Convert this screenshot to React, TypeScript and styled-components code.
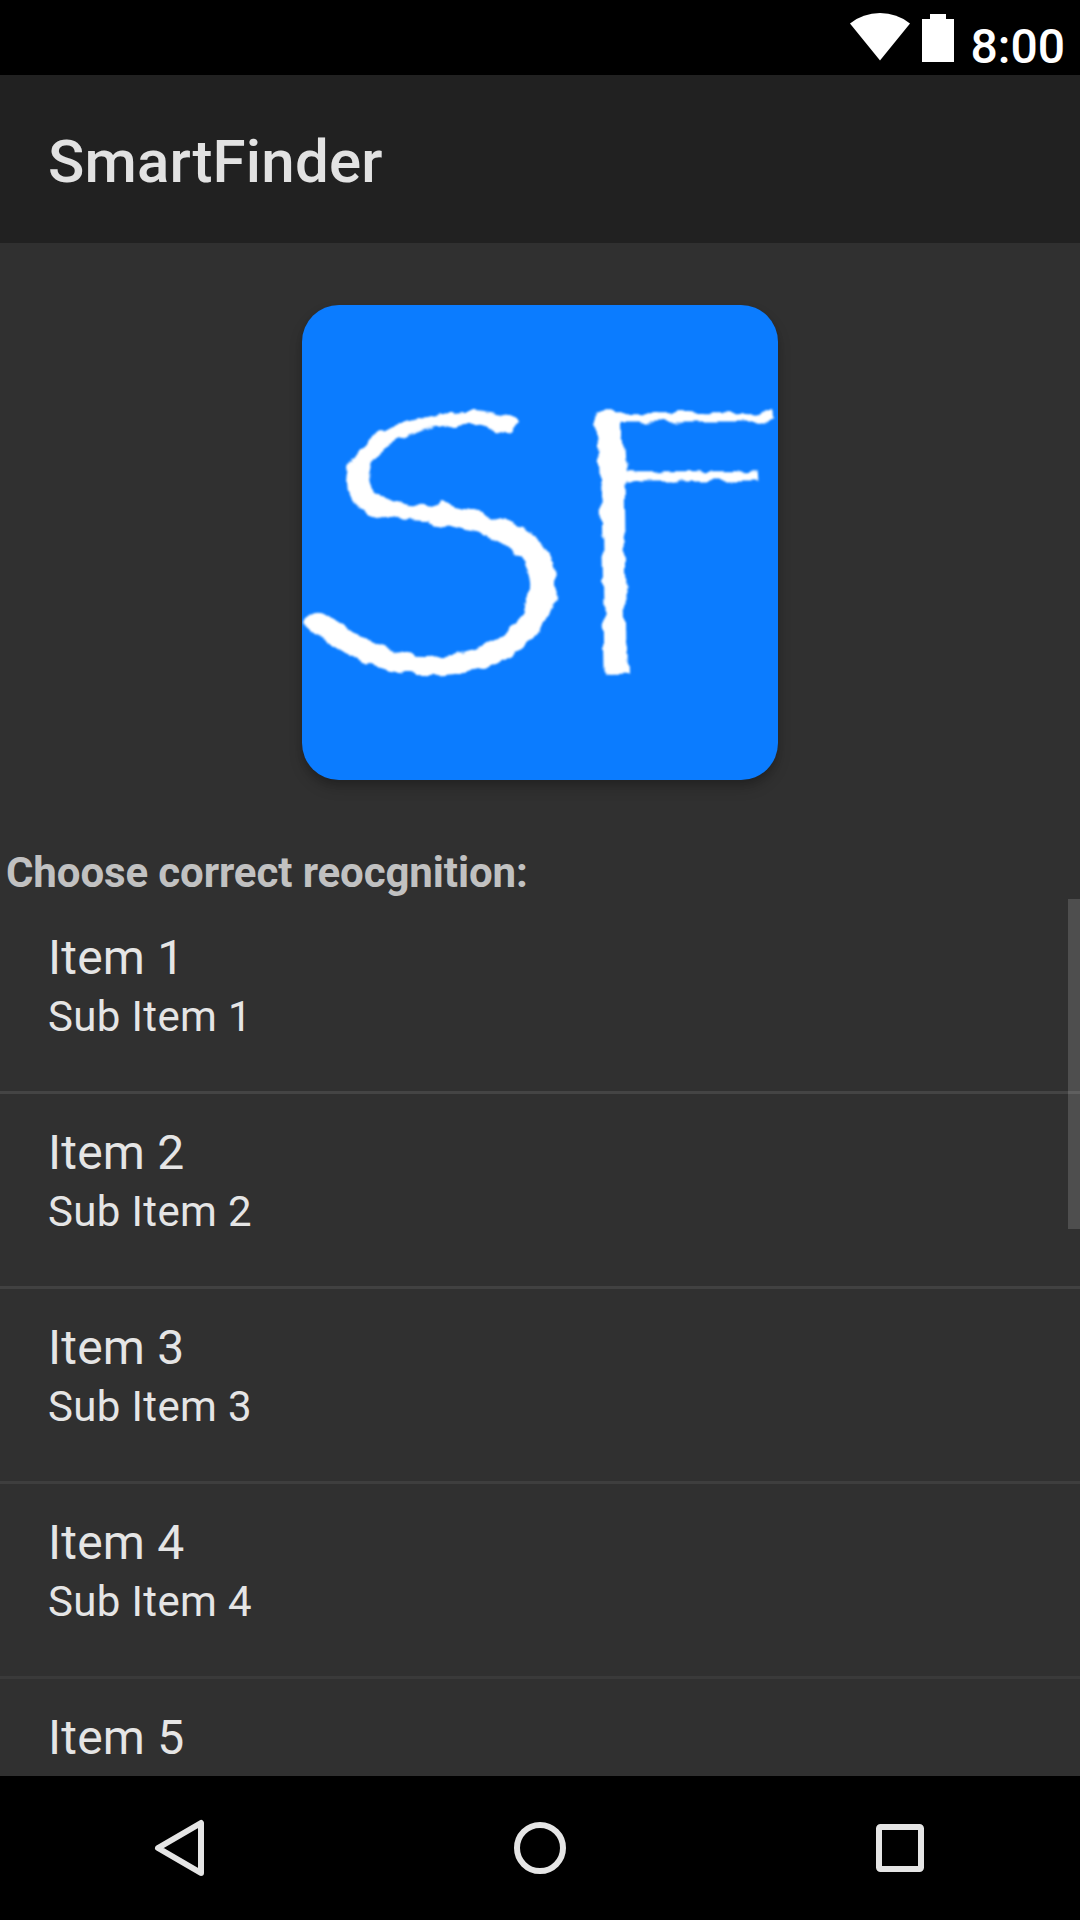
import React from "react";
import styled, { createGlobalStyle } from "styled-components";

const GlobalStyle = createGlobalStyle`
  * { box-sizing: border-box; }
  body { margin: 0; background: #303030; }
`;

const Screen = styled.div`
  display: flex;
  flex-direction: column;
  width: 1080px;
  height: 1920px;
  overflow: hidden;
  background: #303030;
  color: #e5e5e5;
  font-family: Roboto, "Noto Sans", sans-serif;
`;

const StatusBar = styled.div`
  display: flex;
  flex: none;
  justify-content: flex-end;
  height: 75px;
  padding-right: 15px;
  background: #000;
`;

const WifiIcon = styled.svg`
  width: 60px;
  height: 48px;
  margin: 13px 12px 0 0;
`;

const BatteryIcon = styled.svg`
  width: 32px;
  height: 48px;
  margin: 14px 17px 0 0;
`;

const Clock = styled.span`
  padding-top: 18px;
  color: #fff;
  font-size: 48px;
  font-weight: 500;
  line-height: 58px;
`;

const AppBar = styled.header`
  display: flex;
  flex: none;
  align-items: center;
  height: 168px;
  padding: 5px 48px 0;
  background: #212121;
`;

const Title = styled.h1`
  margin: 0;
  color: #e2e2e2;
  font-size: 60px;
  font-weight: 500;
  letter-spacing: 0.2px;
  line-height: 72px;
`;

const Hero = styled.div`
  display: flex;
  flex: none;
  justify-content: center;
  height: 599px;
  padding-top: 62px;
`;

const Logo = styled.div`
  width: 476px;
  height: 475px;
  border-radius: 37px;
  background: #0b7cff;
  box-shadow: 0 8px 14px rgba(0, 0, 0, 0.18), 0 4px 6px rgba(0, 0, 0, 0.12);
`;

const LogoArt = styled.svg`
  display: block;
  width: 476px;
  height: 475px;
  fill: #fff;
  stroke: #fff;
  font-family: Lato, sans-serif;
  font-weight: 300;
`;

const Prompt = styled.p`
  flex: none;
  height: 57px;
  margin: 0;
  padding: 6px 6px 0;
  color: #c1c1c1;
  font-size: 42px;
  font-weight: 700;
  letter-spacing: -0.11px;
  line-height: 50px;
`;

const ListArea = styled.div`
  position: relative;
  flex: 1;
  min-height: 0;
  overflow: hidden;
`;

const Row = styled.div<{ $line: string }>`
  height: 195px;
  padding: 30px 48px 0;
  border-bottom: 3px solid ${(p) => p.$line};
`;

const RowTitle = styled.div`
  height: 58px;
  font-size: 48px;
  letter-spacing: 0.2px;
  line-height: 58px;
`;

const RowSub = styled.div`
  height: 60px;
  font-size: 42px;
  letter-spacing: 0.36px;
  line-height: 60px;
`;

const ScrollThumb = styled.div`
  position: absolute;
  top: 0;
  right: 0;
  width: 12px;
  height: 330px;
  background: rgba(255, 255, 255, 0.145);
`;

const NavBar = styled.nav`
  display: flex;
  flex: none;
  align-items: center;
  justify-content: center;
  gap: 276px;
  height: 144px;
  background: #000;
`;

const NavIcon = styled.svg`
  width: 84px;
  height: 84px;
  fill: none;
  stroke: #e5e5e5;
  stroke-width: 6;
  stroke-linejoin: round;
`;

const items = [
  { title: "Item 1", sub: "Sub Item 1", line: "#444" },
  { title: "Item 2", sub: "Sub Item 2", line: "#414141" },
  { title: "Item 3", sub: "Sub Item 3", line: "#3e3e3e" },
  { title: "Item 4", sub: "Sub Item 4", line: "#3a3a3a" },
  { title: "Item 5", line: "#383838" },
];

export default function App() {
  return (
    <Screen>
      <GlobalStyle />
      <StatusBar>
        <WifiIcon viewBox="0 0 60 48">
          <path d="M0 10.5Q13 0 30 0T60 10.5L30 47.5Z" fill="#fff" />
        </WifiIcon>
        <BatteryIcon viewBox="0 0 32 48">
          <path d="M0 5H8V0H24V5H32V48H0Z" fill="#fff" />
        </BatteryIcon>
        <Clock>8:00</Clock>
      </StatusBar>
      <AppBar>
        <Title>SmartFinder</Title>
      </AppBar>
      <Hero>
        <Logo>
          <LogoArt viewBox="0 0 476 475">
            <defs>
              <filter id="rough" x="-10%" y="-10%" width="120%" height="120%">
                <feTurbulence type="fractalNoise" baseFrequency="0.06" numOctaves="2" seed="4" />
                <feDisplacementMap in="SourceGraphic" scale="11" xChannelSelector="R" yChannelSelector="G" />
                <feGaussianBlur stdDeviation="0.9" />
              </filter>
              <clipPath id="s-upper">
                <path d="M-60-400H400V-170H114L78-91H-60Z" />
              </clipPath>
              <clipPath id="s-lower">
                <path d="M400 100V-171H113L77-92V100Z" />
              </clipPath>
              <clipPath id="s-tail">
                <rect x="-60" y="-91" width="138" height="190" />
              </clipPath>
              <clipPath id="f-upper">
                <rect x="-40" y="-400" width="400" height="290" />
              </clipPath>
              <clipPath id="f-lower">
                <rect x="-40" y="-111" width="400" height="200" />
              </clipPath>
            </defs>
            <g filter="url(#rough)">
              <g transform="matrix(1.288 -0.205 0.01 0.817 12 334)">
                <text clipPath="url(#s-upper)" fontSize="350" strokeWidth="1">S</text>
              </g>
              <g transform="matrix(1.61 -0.05 0.047 1.22 -13 371)" aria-hidden="true">
                <text clipPath="url(#s-lower)" fontSize="350" strokeWidth="0">S</text>
              </g>
              <g transform="matrix(1.75 0.16 0.047 1.32 -24 354.5)" aria-hidden="true">
                <text clipPath="url(#s-tail)" fontSize="350" strokeWidth="0">S</text>
              </g>
              <g transform="matrix(1.12 0 0.03 0.476 261 231)">
                <text clipPath="url(#f-upper)" fontSize="365" strokeWidth="4">F</text>
              </g>
              <g transform="matrix(1.12 0 0.03 1.72 261 368)" aria-hidden="true">
                <text clipPath="url(#f-lower)" fontSize="365" strokeWidth="2">F</text>
              </g>
            </g>
          </LogoArt>
        </Logo>
      </Hero>
      <Prompt>Choose correct reocgnition:</Prompt>
      <ListArea>
        {items.map((item) => (
          <Row key={item.title} $line={item.line}>
            <RowTitle>{item.title}</RowTitle>
            {item.sub && <RowSub>{item.sub}</RowSub>}
          </Row>
        ))}
        <ScrollThumb />
      </ListArea>
      <NavBar>
        <NavIcon viewBox="0 0 84 84">
          <path d="M63 17V67L20 42Z" />
        </NavIcon>
        <NavIcon viewBox="0 0 84 84">
          <circle cx="42" cy="42" r="23" />
        </NavIcon>
        <NavIcon viewBox="0 0 84 84">
          <rect x="21" y="21" width="42" height="42" rx="1.5" />
        </NavIcon>
      </NavBar>
    </Screen>
  );
}
